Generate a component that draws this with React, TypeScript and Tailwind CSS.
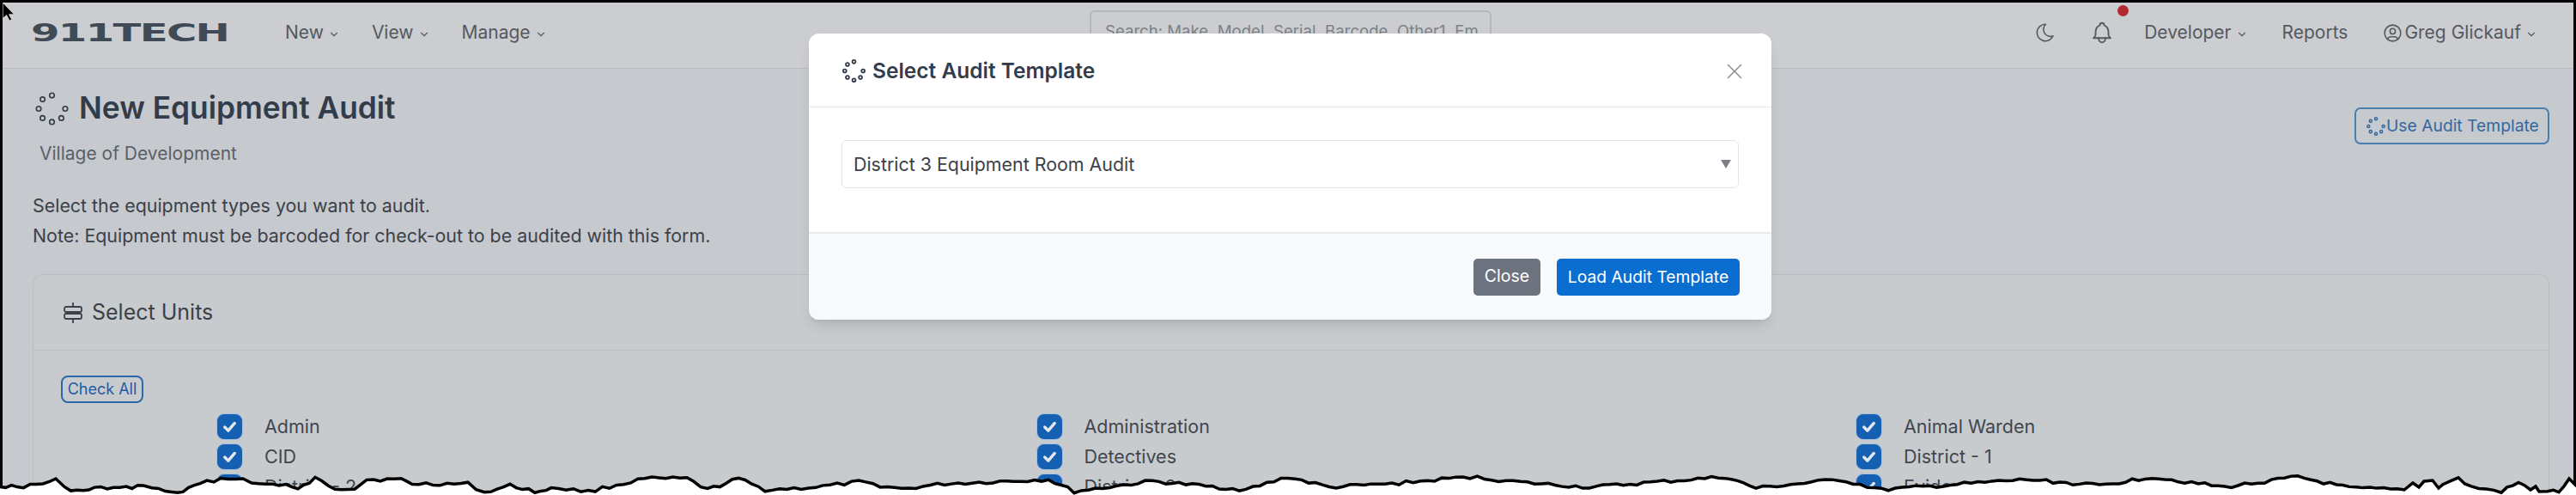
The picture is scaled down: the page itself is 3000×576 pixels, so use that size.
import React from 'react';
import { TbBell, TbChevronDown, TbMoon, TbUserCircle, TbX } from 'react-icons/tb';

// anillos del spinner, falta el de arriba a la derecha
const Spinner = ({ className }: { className: string }) => (
    <svg viewBox="0 0 24 24" fill="none" stroke="currentColor" strokeWidth="1" className={className}>
        {[0, 2, 3, 4, 5, 6, 7].map((i) => {
            const a = ((i * 45 - 90) * Math.PI) / 180;
            return <circle key={i} cx={12 + Math.cos(a) * 9.5} cy={12 + Math.sin(a) * 9.5} r="1.7" />;
        })}
    </svg>
);

const SignIcon = () => (
    <svg viewBox="0 0 24 26" fill="none" stroke="currentColor" strokeWidth="1.8" strokeLinejoin="round" className="w-[24px] h-[26px]">
        <path d="M12 1v5M12 20v5M12 12v2" />
        <rect x="2" y="6" width="20" height="6" rx="2" />
        <rect x="2" y="14" width="20" height="6" rx="2" />
    </svg>
);

const NavItem = ({ label }: { label: string }) => (
    <div className="flex items-center gap-[5px] text-[21px] text-[#55595f]">
        {label}
        <TbChevronDown className="w-[14px] h-[14px] mt-[3px]" />
    </div>
);

const UnitRow = ({ label }: { label: string }) => (
    <div className="flex items-center h-[35px]">
        <div className="flex items-center justify-center w-[31px] h-[31px] rounded-[9px] bg-[#1560b2] border border-[#a9c3dd]">
            <svg viewBox="0 0 20 20" className="w-[23px] h-[23px]" fill="none" stroke="#e4e8ee" strokeWidth="3" strokeLinecap="round" strokeLinejoin="round">
                <path d="M5 10.5l3.5 3.5L15 6.5" />
            </svg>
        </div>
        <span className="ml-[25px] text-[21.5px] text-[#41464e]">{label}</span>
    </div>
);

// borde rasgado de la captura, calcado a mano
const tornBase: [number, number][] = [
    [0, 565], [20, 567], [50, 563], [65, 557], [75, 568], [97, 572], [110, 568], [147, 568], [167, 565], [177, 568],
    [200, 573], [213, 572], [233, 563], [257, 557], [283, 557], [293, 563], [333, 564], [347, 570], [367, 557], [390, 568],
    [413, 568], [427, 558], [467, 558], [480, 563], [545, 563], [564, 573], [594, 565], [630, 573], [642, 567], [685, 572],
    [751, 557], [800, 557], [824, 570], [860, 557], [891, 570], [950, 567], [1000, 561], [1050, 569], [1100, 563], [1221, 558],
    [1251, 572], [1342, 560], [1451, 570], [1500, 555], [1548, 567], [1621, 563], [1712, 555], [1779, 562], [1851, 567], [2009, 555],
    [2045, 568], [2142, 558], [2191, 570], [2360, 558], [2445, 565], [2506, 555], [2591, 567], [2676, 555], [2736, 568], [2800, 570],
    [2810, 562], [2817, 567], [2823, 560], [2833, 559], [2840, 568], [2845, 563], [2863, 557], [2878, 567], [2913, 572], [2933, 562],
    [2947, 570], [2953, 566], [2957, 572], [2967, 571], [2980, 573], [2992, 557], [3000, 565],
];

const tornPoints = () => {
    const pts: string[] = [];
    let seed = 17;
    for (let i = 0; i < tornBase.length - 1; i++) {
        const [x0, y0] = tornBase[i];
        const [x1, y1] = tornBase[i + 1];
        const steps = Math.max(1, Math.round((x1 - x0) / 8));
        for (let s = 0; s < steps; s++) {
            seed = (seed * 9301 + 49297) % 233280;
            const jitter = steps > 1 ? (seed / 233280 - 0.5) * 4 : 0;
            pts.push(`${x0 + ((x1 - x0) * s) / steps},${y0 + ((y1 - y0) * s) / steps + jitter}`);
        }
    }
    pts.push('3000,565');
    return pts.join(' ');
};

const App: React.FC = () => {
    const points = tornPoints();

    return (
        <div className="relative w-[3000px] h-[576px] overflow-hidden font-['Inter',sans-serif]">
            <div className="relative h-[576px] overflow-hidden bg-[#c6c9cd] border-x-[3px] border-t-[3px] border-black">
                {/* Navbar */}
                <div className="flex items-center justify-between h-[77px] pb-[6px] bg-[#cbcdd0] border-b border-[#b9bcc0] pl-[33px] pr-[42px]">
                    <div className="flex items-center">
                        <div className="w-[229px] font-['DejaVu_Sans',sans-serif] font-bold text-[29px] leading-none text-[#3f4a56] tracking-[-1px] scale-x-[1.66] origin-left">911TECH</div>
                        <div className="flex items-center gap-[37px] ml-[67px]">
                            <NavItem label="New" />
                            <NavItem label="View" />
                            <NavItem label="Manage" />
                        </div>
                    </div>
                    <div className="flex items-center">
                        <TbMoon className="w-[26px] h-[26px] text-[#55595f] mr-[38px] stroke-[1.5]" />
                        <div className="relative mr-[34px]">
                            <TbBell className="w-[30px] h-[30px] text-[#55595f] stroke-[1.5]" />
                            <span className="absolute -top-[17px] right-[-16px] w-[13px] h-[13px] rounded-full bg-[#b12a30]" />
                        </div>
                        <NavItem label="Developer" />
                        <div className="ml-[40px] text-[21px] text-[#55595f]">Reports</div>
                        <TbUserCircle className="ml-[40px] mr-[1px] w-[25px] h-[25px] text-[#55595f] stroke-[1.5]" />
                        <NavItem label="Greg Glickauf" />
                    </div>
                </div>

                {/* Search, lo tapa el modal */}
                <div className="absolute left-[1266px] top-[9px] w-[468px] h-[50px] border-2 border-[#b4b7bb] rounded-[6px] px-[16px] text-[18.6px] leading-[44px] text-[#7d8186] overflow-hidden whitespace-nowrap">
                    Search: Make, Model, Serial, Barcode, Other1, Em
                </div>

                {/* Contenido */}
                <div className="pl-[35px] pr-[28px]">
                    <div className="flex items-start justify-between">
                        <div>
                            <div className="flex items-center gap-[12px] mt-[21px] pl-[3px]">
                                <Spinner className="w-[39px] h-[39px] text-[#333c4a]" />
                                <h1 className="text-[35.3px] leading-[50px] font-semibold text-[#333c4a]">New Equipment Audit</h1>
                            </div>
                            <div className="mt-[13px] pl-[8px] text-[21px] leading-[30px] text-[#5b6068]">Village of Development</div>
                        </div>
                        <button className="flex items-center gap-[1px] mt-[45px] h-[43px] w-[227px] pl-[12px] rounded-[7px] border-2 border-[#4a7eae] text-[19.3px] text-[#35689f]">
                            <Spinner className="w-[22px] h-[22px] stroke-[1.6]" />
                            Use Audit Template
                        </button>
                    </div>
                    <div className="mt-[28px] text-[21.4px] leading-[35px] text-[#3c4149]">
                        <p>Select the equipment types you want to audit.</p>
                        <p>Note: Equipment must be barcoded for check-out to be audited with this form.</p>
                    </div>

                    {/* Card */}
                    <div className="mt-[27px] h-[300px] rounded-[12px] border border-[#b9bcc0] bg-[#c8cbce]">
                        <div className="flex items-center gap-[10px] h-[88px] pl-[34px] border-b border-[#b9bcc0] text-[25px] text-[#3c4149]">
                            <SignIcon />
                            Select Units
                        </div>
                        <div className="pl-[32px] pt-[29px]">
                            <button className="block w-[96px] h-[32px] rounded-[8px] border-2 border-[#2c67a8] text-[18px] leading-[26px] text-[#1d5ca5]">Check All</button>
                            <div className="grid grid-cols-[954.5px_954.5px_954.5px] mt-[10px] pl-[181px]">
                                <UnitRow label="Admin" />
                                <UnitRow label="Administration" />
                                <UnitRow label="Animal Warden" />
                                <UnitRow label="CID" />
                                <UnitRow label="Detectives" />
                                <UnitRow label="District - 1" />
                                <UnitRow label="District - 2" />
                                <UnitRow label="District - 3" />
                                <UnitRow label="Evidence" />
                            </div>
                        </div>
                    </div>
                </div>

                {/* Modal */}
                <div className="absolute left-[939px] top-[36px] w-[1121px] h-[333px] bg-white rounded-[12px] overflow-hidden flex flex-col shadow-lg">
                    <div className="flex items-center justify-between h-[86px] pt-[2px] pl-[39px] pr-[28px] border-b border-[#e4e6e9]">
                        <div className="flex items-center gap-[8px] text-[24.5px] font-semibold text-[#333c4a]">
                            <Spinner className="w-[27px] h-[27px] stroke-[1.6]" />
                            Select Audit Template
                        </div>
                        <TbX className="w-[30px] h-[30px] text-[#8f9399] stroke-[1.3]" />
                    </div>
                    <div className="px-[38px] pt-[38px] h-[145px]">
                        <div className="flex items-center justify-between h-[56px] pl-[13px] pr-[8px] rounded-[6px] border border-[#e2e4e8] text-[21.4px] text-[#3c4149]">
                            District 3 Equipment Room Audit
                            <span className="w-0 h-0 border-x-[6px] border-x-transparent border-t-[10px] border-t-[#7b7f85]" />
                        </div>
                    </div>
                    <div className="flex flex-1 items-center justify-end gap-[19px] px-[37px] bg-[#f8f9fb] border-t-2 border-[#e8eaec]">
                        <button className="h-[43px] w-[78px] rounded-[5px] bg-[#6c727e] text-[19.5px] text-white">Close</button>
                        <button className="h-[43px] w-[213px] rounded-[5px] bg-[#0a6ed1] text-[19.3px] text-white">Load Audit Template</button>
                    </div>
                </div>
            </div>

            {/* Cursor */}
            <svg viewBox="0 0 16 24" className="absolute left-[3px] top-[3px] w-[15px] h-[22px]">
                <path d="M0 0v20l5-4 3.5 7 3-1.5-3.5-6.5h6.5z" fill="#000" stroke="#fff" strokeWidth="0.7" />
            </svg>

            {/* Borde rasgado */}
            <svg viewBox="0 0 3000 576" className="absolute left-0 top-0 w-[3000px] h-[576px]">
                <polygon points={`-5,590 -5,565 ${points} 3005,565 3005,590`} fill="#fff" stroke="#000" strokeWidth="3.5" />
            </svg>
        </div>
    );
};

export default App;
